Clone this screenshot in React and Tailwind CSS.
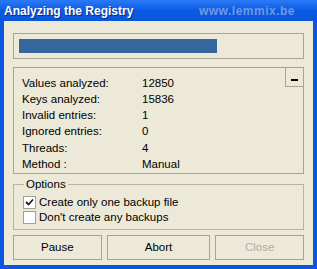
import { useState } from 'react';

const stats = [
  ['Values analyzed:', '12850'],
  ['Keys analyzed:', '15836'],
  ['Invalid entries:', '1'],
  ['Ignored entries:', '0'],
  ['Threads:', '4'],
  ['Method :', 'Manual'],
];

function Check({ checked, onClick }) {
  return (
    <button
      type="button"
      onClick={onClick}
      className="flex h-[13px] w-[13px] items-center justify-center border border-[#a29f93] bg-white"
    >
      {checked && (
        <svg width="9" height="9" viewBox="0 0 9 9">
          <path d="M1 4 L3.5 6.5 L8 1.5" fill="none" stroke="#1c1c1c" strokeWidth="1.8" />
        </svg>
      )}
    </button>
  );
}

export default function App() {
  const [oneBackup, setOneBackup] = useState(true);
  const [noBackups, setNoBackups] = useState(false);

  return (
    <div
      className="flex h-[269px] w-[317px] flex-col overflow-hidden bg-[#0a58e2] text-[11.5px] text-black"
      style={{ fontFamily: '"Liberation Sans", Arial, sans-serif' }}
    >
      <div className="flex h-[21px] items-center justify-between bg-gradient-to-b from-[#2a7af6] via-[#0a5ae6] to-[#0b56d8] pl-[4px] pr-[22px]">
        <span className="text-[12px] font-bold text-white [text-shadow:1px_1px_0_#0a2a80]">Analyzing the Registry</span>
        <span className="text-[12px] font-bold tracking-[0.5px] text-[#6f9ae6]">www.lemmix.be</span>
      </div>

      <div className="mx-[4px] mb-[4px] flex flex-1 flex-col bg-[#ece9d8] px-[9px] pb-[5px] pt-[12px]">
        <div className="h-[26px] border border-[#a8a393] p-[5px]">
          <div className="h-full w-[198px] bg-[#35679c]" />
        </div>

        <div className="relative mt-[8px] h-[107px] border border-[#a8a393] pl-[8px] pt-[7px]">
          <div className="absolute right-[-1px] top-[-1px] flex h-[20px] w-[19px] items-end justify-center border border-[#a8a393] pb-[5px]">
            <span className="block h-[2px] w-[7px] bg-black" />
          </div>
          {stats.map(([label, value]) => (
            <div key={label} className="flex h-[16.3px] items-center">
              <span className="w-[120px]">{label}</span>
              <span>{value}</span>
            </div>
          ))}
        </div>

        <fieldset className="mt-[4px] h-[52px] border border-[#b8b4a3] px-[9px] pt-[4px]">
          <legend className="ml-[1px] px-[2px] leading-[13px]">Options</legend>
          <label className="flex h-[15px] items-center gap-[3px]">
            <Check checked={oneBackup} onClick={() => setOneBackup(!oneBackup)} />
            <span>Create only one backup file</span>
          </label>
          <label className="flex h-[15px] items-center gap-[3px]">
            <Check checked={noBackups} onClick={() => setNoBackups(!noBackups)} />
            <span>Don't create any backups</span>
          </label>
        </fieldset>

        <div className="mt-[5px] flex gap-[5px]">
          <button type="button" className="h-[25px] w-[89px] border border-[#a8a393] bg-[#ece9d8]">Pause</button>
          <button type="button" className="h-[25px] w-[104px] border border-[#a8a393] bg-[#ece9d8]">Abort</button>
          <button type="button" className="h-[25px] w-[89px] border border-[#a8a393] bg-[#ece9d8] text-[#b0ad9f]">Close</button>
        </div>
      </div>
    </div>
  );
}
